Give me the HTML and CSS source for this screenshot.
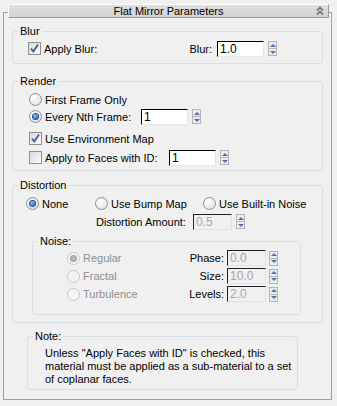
FILE: index.html
```html
<!DOCTYPE html>
<html lang="en">
<head>
  <meta charset="UTF-8">
  <meta name="viewport" content="width=device-width, initial-scale=1.0">
  <title>Flat Mirror Parameters</title>
  <link rel="stylesheet" href="styles.css">
</head>
<body>
  <div class="rollout">
    <div class="rollout-head">
      Flat Mirror Parameters
      <svg class="collapse" width="8" height="11" viewBox="0 0 8 11">
        <polyline points="1,5.5 4,2.5 7,5.5" />
        <polyline points="1,9.5 4,6.5 7,9.5" />
      </svg>
    </div>

    <div class="group blur-group">
      <span class="group-title">Blur</span>
      <div class="row">
        <span class="cb on"><svg width="11" height="11" viewBox="0 0 11 11"><path d="M2 5.5 L4.3 8.5 L9 1.5" /></svg></span>
        <span class="txt">Apply Blur:</span>
        <div class="field push">
          <span class="field-label">Blur:</span>
          <span class="edit">1.0</span>
          <span class="spin"><i class="up"></i><i class="down"></i></span>
        </div>
      </div>
    </div>

    <div class="group render-group">
      <span class="group-title">Render</span>
      <div class="row r1">
        <span class="rb"></span>
        <span class="txt">First Frame Only</span>
      </div>
      <div class="row">
        <span class="rb on"></span>
        <span class="txt nth-label">Every Nth Frame:</span>
        <span class="edit">1</span>
        <span class="spin"><i class="up"></i><i class="down"></i></span>
      </div>
      <div class="row r3">
        <span class="cb on"><svg width="11" height="11" viewBox="0 0 11 11"><path d="M2 5.5 L4.3 8.5 L9 1.5" /></svg></span>
        <span class="txt">Use Environment Map</span>
      </div>
      <div class="row r4">
        <span class="cb"></span>
        <span class="txt faces-label">Apply to Faces with ID:</span>
        <span class="edit">1</span>
        <span class="spin"><i class="up"></i><i class="down"></i></span>
      </div>
    </div>

    <div class="group dist-group">
      <span class="group-title">Distortion</span>
      <div class="row">
        <div class="opt none-opt"><span class="rb on"></span><span class="txt">None</span></div>
        <div class="opt bump-opt"><span class="rb"></span><span class="txt">Use Bump Map</span></div>
        <div class="opt"><span class="rb"></span><span class="txt">Use Built-in Noise</span></div>
      </div>
      <div class="row amount-row">
        <span class="amount-label">Distortion Amount:</span>
        <span class="edit small off">0.5</span>
        <span class="spin"><i class="up"></i><i class="down"></i></span>
      </div>

      <div class="group noise-group">
        <span class="group-title">Noise:</span>
        <div class="noise-body">
          <div class="noise-types">
            <div class="row nrow"><span class="rb on off"></span><span class="txt dim">Regular</span></div>
            <div class="row nrow"><span class="rb off"></span><span class="txt dim">Fractal</span></div>
            <div class="row nrow"><span class="rb off"></span><span class="txt dim">Turbulence</span></div>
          </div>
          <div class="noise-values">
            <span class="val-label">Phase:</span>
            <span class="edit small off">0.0</span>
            <span class="spin"><i class="up"></i><i class="down"></i></span>
            <span class="val-label">Size:</span>
            <span class="edit small off">10.0</span>
            <span class="spin"><i class="up"></i><i class="down"></i></span>
            <span class="val-label">Levels:</span>
            <span class="edit small off">2.0</span>
            <span class="spin"><i class="up"></i><i class="down"></i></span>
          </div>
        </div>
      </div>
    </div>

    <div class="group note-group">
      <span class="group-title">Note:</span>
      <p class="note-text">Unless "Apply Faces with ID" is checked, this<br>material must be applied as a sub-material to a set<br>of coplanar faces.</p>
    </div>
  </div>
</body>
</html>
```

FILE: styles.css
```css
body {
  margin: 0;
  background-color: #f0f0f0;
  font-family: "Liberation Sans", Arial, sans-serif;
  font-size: 11px;
  color: #000;
}

.rollout {
  margin: 12px 0 0 3px;
  width: 327px;
  height: 386px;
  border: 1px solid #a0a0a0;
}

.rollout-head {
  position: relative;
  box-sizing: border-box;
  margin: -9px 0 0 4px;
  width: 321px;
  height: 14px;
  line-height: 12px;
  text-align: center;
  background: linear-gradient(#dedede, #d3d3d3);
  border-top: 1px solid #fff;
  border-left: 1px solid #fff;
  border-right: 1px solid #9a9a9a;
  border-bottom: 1px solid #9a9a9a;
}

.collapse {
  position: absolute;
  right: 4px;
  top: 0;
  fill: none;
  stroke: #6b6b6b;
  stroke-width: 1.6;
}

/* group boxes */
.group {
  position: relative;
  box-sizing: border-box;
  margin-left: 8px;
  width: 311px;
  border: 1px solid #d5dfe5;
  border-radius: 3px;
}

.group-title {
  position: absolute;
  top: -7px;
  left: 5px;
  padding: 0 2px;
  line-height: 13px;
  background-color: #f0f0f0;
}

.blur-group {
  margin-top: 13px;
  height: 33px;
  padding: 8px 45px 0 15px;
}

.render-group {
  margin-top: 17px;
  height: 90px;
  padding: 9px 0 0 16px;
}

.dist-group {
  margin-top: 14px;
  height: 138px;
  padding: 9px 0 0 13px;
}

.note-group {
  margin: 13px 0 0 23px;
  width: 271px;
  height: 54px;
}

.noise-group {
  margin: 11px 0 0 6px;
  width: 269px;
  height: 74px;
  padding: 7px 22px 0 34px;
}

/* rows */
.row {
  display: flex;
  align-items: center;
  height: 17px;
}

.r3 {
  margin-top: 5px;
}

.r4 {
  margin-top: 2px;
}

.push {
  margin-left: auto;
}

.field {
  display: flex;
  align-items: center;
}

.field-label {
  margin-right: 5px;
}

.txt {
  margin-left: 3px;
  white-space: nowrap;
}

.dim {
  color: #8e8e8e;
}

.nth-label {
  width: 96px;
}

.faces-label {
  width: 124px;
}

.opt {
  display: flex;
  align-items: center;
}

.none-opt {
  width: 69px;
}

.bump-opt {
  width: 108px;
}

.amount-row {
  margin-top: 1px;
  padding-left: 70px;
}

.amount-label {
  width: 97px;
}

.noise-body {
  display: flex;
}

.nrow {
  height: 18px;
}

.noise-values {
  margin-left: auto;
  display: grid;
  grid-template-columns: auto 39px 9px;
  grid-auto-rows: 18px;
  column-gap: 3px;
  align-items: center;
}

.val-label {
  text-align: right;
}

.note-text {
  margin: 0;
  padding: 10px 0 0 17px;
  line-height: 13px;
}

/* controls */
.cb {
  box-sizing: border-box;
  width: 13px;
  height: 13px;
  flex: none;
  border: 1px solid #8e8f8f;
  background: linear-gradient(135deg, #dadada, #fbfbfb);
}

.cb svg {
  display: block;
  fill: none;
  stroke: #44598c;
  stroke-width: 1.8;
}

.rb {
  box-sizing: border-box;
  width: 13px;
  height: 13px;
  flex: none;
  border: 1px solid #8e8f8f;
  border-radius: 50%;
  background: radial-gradient(circle at 35% 30%, #fff, #dcdcdc);
  display: flex;
  align-items: center;
  justify-content: center;
}

.rb.on::after {
  content: "";
  width: 5px;
  height: 5px;
  border-radius: 50%;
  background: radial-gradient(circle at 40% 35%, #8fc0f0, #2a68b4 70%);
  box-shadow: 0 0 0 1px #1d4f8f;
}

.rb.off {
  border-color: #c6c6c6;
  background: #f4f4f4;
}

.rb.on.off::after {
  background: #b5b5b5;
  box-shadow: 0 0 0 1px #a0a0a0;
}

.edit {
  box-sizing: border-box;
  width: 47px;
  height: 16px;
  flex: none;
  padding-left: 2px;
  line-height: 14px;
  font-size: 12px;
  background-color: #fff;
  border: 1px solid;
  border-color: #000 #e6e6e6 #e6e6e6 #000;
}

.edit.small {
  width: 39px;
}

.edit.off {
  color: #a6a6a6;
  background-color: #f0f0f0;
  border-color: #202020 #e2e2e2 #e2e2e2 #202020;
}

.spin {
  box-sizing: border-box;
  width: 9px;
  height: 15px;
  flex: none;
  margin-left: 4px;
  border: 1px solid #b4b4b4;
  background-color: #e9edf3;
  display: flex;
  flex-direction: column;
}

.noise-values .spin {
  margin-left: 0;
}

.spin i {
  flex: 1;
  display: flex;
  align-items: center;
  justify-content: center;
}

.spin .up {
  border-bottom: 1px solid #b4b4b4;
}

.spin .up::after {
  content: "";
  border-left: 3px solid transparent;
  border-right: 3px solid transparent;
  border-bottom: 3px solid #5172ab;
}

.spin .down::after {
  content: "";
  border-left: 3px solid transparent;
  border-right: 3px solid transparent;
  border-top: 3px solid #5172ab;
}
```
